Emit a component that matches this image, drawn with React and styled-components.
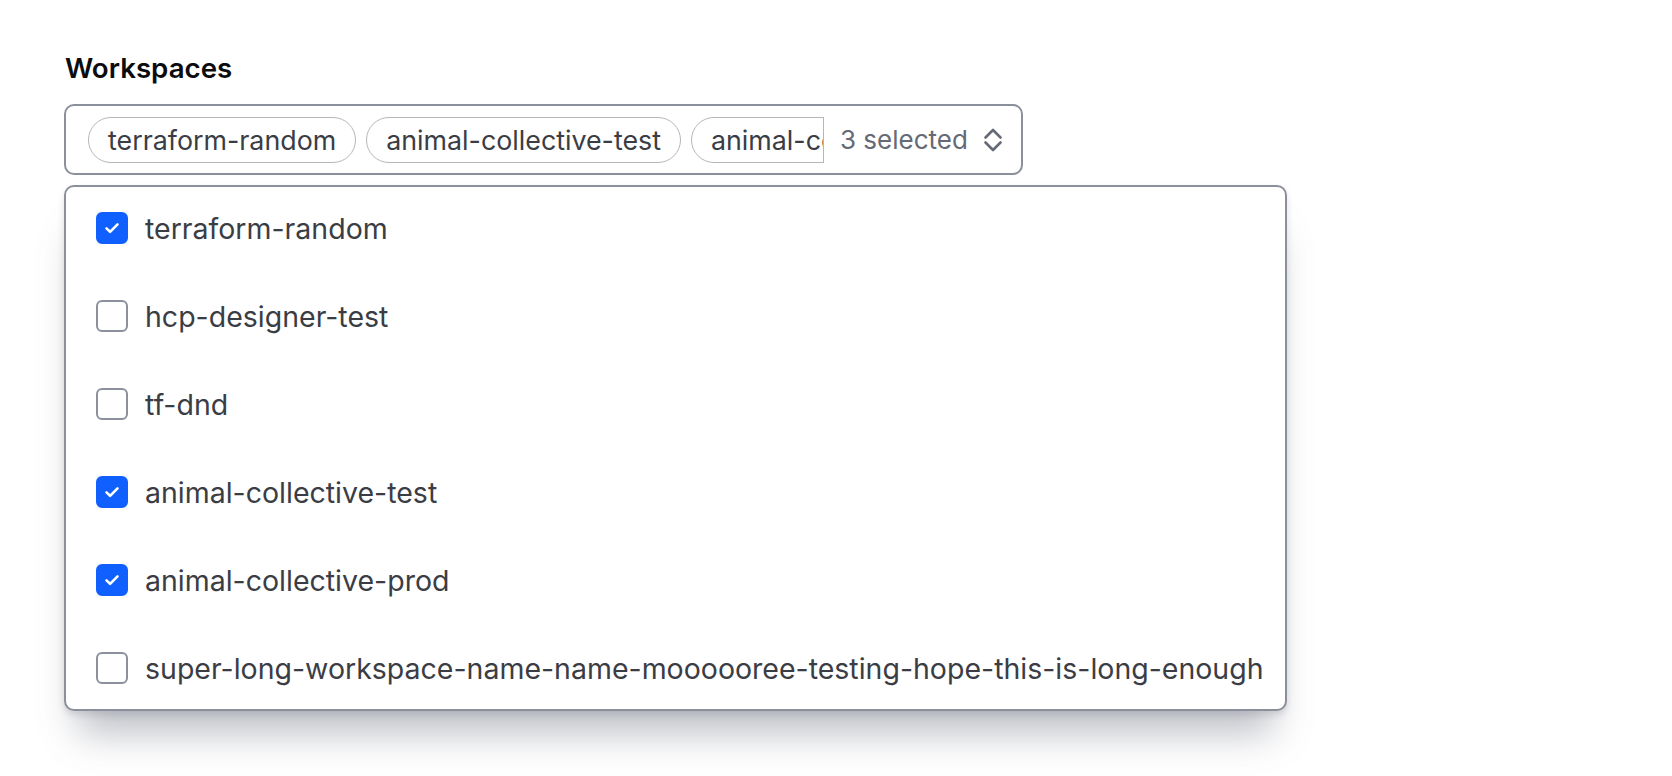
import React from "react";
import styled, { createGlobalStyle } from "styled-components";

const GlobalStyle = createGlobalStyle`
  html, body { margin: 0; padding: 0; background: #ffffff; }
  body { font-family: Inter, "Noto Sans", "Liberation Sans", sans-serif; -webkit-font-smoothing: antialiased; }
  * { box-sizing: border-box; }
`;

const Page = styled.div`
  padding: 50px 64px 80px 64px;
  display: flex;
  flex-direction: column;
  align-items: flex-start;
`;

const Label = styled.div`
  font-size: 27.7px;
  line-height: 36px;
  font-weight: 600;
  color: #0c0c0e;
  margin: 0 0 18px 1px;
`;

const Trigger = styled.div`
  width: 959px;
  height: 71px;
  border: 2px solid #8c909c;
  border-radius: 10px;
  display: flex;
  align-items: center;
  padding: 0 17px 0 22px;
  background: #fff;
`;

const ChipTrack = styled.div`
  display: flex;
  align-items: center;
  gap: 10px;
  width: 736px;
  flex: none;
  overflow: hidden;
  border-right: 1.5px solid #b4b6bc;
`;

const Chip = styled.span`
  flex: none;
  height: 46px;
  display: inline-flex;
  align-items: center;
  padding: 0 19px;
  border: 1.5px solid #b4b6bc;
  border-radius: 23px;
  font-size: 26.8px;
  color: #3b3d45;
  white-space: nowrap;
`;

const Count = styled.span`
  margin-left: 16px;
  font-size: 26px;
  color: #656a76;
  white-space: nowrap;
`;

const Caret = styled.svg`
  margin-left: 13px;
  flex: none;
  color: #656a76;
`;

const Menu = styled.div`
  margin-top: 10px;
  width: 1223px;
  border: 2px solid #8c909c;
  border-radius: 10px;
  background: #fff;
  display: flex;
  flex-direction: column;
  gap: 6px;
  box-shadow: 0 4px 6px rgba(101, 106, 118, 0.2), 0 36px 36px -14px rgba(101, 106, 118, 0.42);
`;

const Option = styled.label`
  height: 82px;
  display: flex;
  align-items: center;
  gap: 17px;
  padding: 0 20px 0 30px;
  font-size: 28.5px;
  color: #3b3d45;
  white-space: nowrap;
`;

const Box = styled.span`
  flex: none;
  width: 32px;
  height: 32px;
  border-radius: 6px;
  display: inline-flex;
  align-items: center;
  justify-content: center;
  background: ${(p) => (p.$checked ? "#1060ff" : "#ffffff")};
  border: 2px solid ${(p) => (p.$checked ? "#1060ff" : "#8c909c")};
`;

const items = [
  { name: "terraform-random", checked: true },
  { name: "hcp-designer-test", checked: false },
  { name: "tf-dnd", checked: false },
  { name: "animal-collective-test", checked: true },
  { name: "animal-collective-prod", checked: true },
  { name: "super-long-workspace-name-name-moooooree-testing-hope-this-is-long-enough", checked: false },
];

function Check() {
  return (
    <svg width="20" height="20" viewBox="0 0 20 20" fill="none">
      <path d="M4.5 10.4l3.6 3.4L15.5 6.4" stroke="#fff" strokeWidth="2.6" strokeLinecap="round" strokeLinejoin="round" />
    </svg>
  );
}

export default function App() {
  return (
    <>
      <GlobalStyle />
      <Page>
        <Label>Workspaces</Label>
        <Trigger>
          <ChipTrack>
            <Chip>terraform-random</Chip>
            <Chip>animal-collective-test</Chip>
            <Chip>animal-collective-prod</Chip>
          </ChipTrack>
          <Count>3 selected</Count>
          <Caret width="24" height="24" viewBox="0 0 24 24" fill="none">
            <path d="M4.5 9.5l7.5-7.5 7.5 7.5" stroke="currentColor" strokeWidth="2.6" strokeLinecap="round" strokeLinejoin="round" />
            <path d="M4.5 14.5l7.5 7.5 7.5-7.5" stroke="currentColor" strokeWidth="2.6" strokeLinecap="round" strokeLinejoin="round" />
          </Caret>
        </Trigger>
        <Menu>
          {items.map((it) => (
            <Option key={it.name}>
              <Box $checked={it.checked}>{it.checked && <Check />}</Box>
              {it.name}
            </Option>
          ))}
        </Menu>
      </Page>
    </>
  );
}
